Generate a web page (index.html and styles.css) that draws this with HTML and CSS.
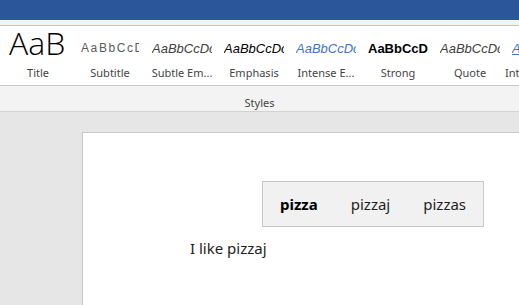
FILE: index.html
```html
<!DOCTYPE html>
<html lang="en">
  <head>
    <meta charset="UTF-8" />
    <title>Styles - pizza</title>
    <link rel="stylesheet" href="styles.css">
  </head>
  <body>
    <div class="titlebar"></div>
    <div class="tabstrip"></div>

    <div class="ribbon">
      <div class="gallery">
        <div class="style-item">
          <div class="preview title">AaB</div>
          <div class="label">Title</div>
        </div>
        <div class="style-item">
          <div class="preview subtitle">AaBbCcD</div>
          <div class="label">Subtitle</div>
        </div>
        <div class="style-item">
          <div class="preview subtle">AaBbCcDc</div>
          <div class="label">Subtle Em...</div>
        </div>
        <div class="style-item">
          <div class="preview emphasis">AaBbCcDc</div>
          <div class="label">Emphasis</div>
        </div>
        <div class="style-item">
          <div class="preview intense">AaBbCcDc</div>
          <div class="label">Intense E...</div>
        </div>
        <div class="style-item">
          <div class="preview strong">AaBbCcDc</div>
          <div class="label">Strong</div>
        </div>
        <div class="style-item">
          <div class="preview quote">AaBbCcDc</div>
          <div class="label">Quote</div>
        </div>
        <div class="style-item">
          <div class="preview intense-quote">AaBbCcDc</div>
          <div class="label">Intense Quote</div>
        </div>
      </div>
    </div>

    <div class="group-bar">
      <span class="group-name">Styles</span>
    </div>

    <div class="workspace">
      <div class="page">
        <div class="suggestions">
          <span class="suggestion first">pizza</span>
          <span class="suggestion">pizzaj</span>
          <span class="suggestion">pizzas</span>
        </div>
        <p class="body-text">I like pizzaj</p>
      </div>
    </div>
  </body>
</html>
```

FILE: styles.css
```css
body {
  margin: 0;
  font-family: "Noto Sans", "Open Sans", sans-serif;
  width: 519px;
  height: 305px;
  overflow: hidden;
  background: #e6e6e6;
}

.titlebar {
  height: 20px;
  background: #2b579a;
}

.tabstrip {
  height: 5px;
  background: #f3f3f3;
  border-bottom: 1px solid #c6c6c6;
}

.ribbon {
  height: 59px;
  background: #fff;
  border-bottom: 1px solid #c6c6c6;
  overflow: hidden;
}

.gallery {
  display: flex;
  padding-left: 2px;
}

.style-item {
  flex: 0 0 72px;
  width: 72px;
  display: flex;
  flex-direction: column;
  align-items: center;
}

.preview {
  width: 60px;
  height: 32px;
  padding-top: 6px;
  overflow: hidden;
  white-space: nowrap;
  display: flex;
  align-items: center;
  font-family: "Liberation Sans", Arial, sans-serif;
  font-size: 13px;
  color: #000;
}

.preview.title {
  font-family: "Open Sans", "Noto Sans", sans-serif;
  font-weight: 300;
  font-size: 32px;
  line-height: 38px;
  height: 38px;
  padding-top: 0;
  padding-left: 3px;
  width: 61px;
  align-items: flex-start;
  margin-top: -2px;
  margin-bottom: 2px;
}

.preview.subtitle {
  color: #5a5a5a;
  letter-spacing: 1.6px;
  font-size: 12px;
  width: 58px;
}

.preview.subtle {
  color: #404040;
  font-style: italic;
}

.preview.emphasis {
  font-style: italic;
}

.preview.intense {
  color: #4472c4;
  font-style: italic;
}

.preview.strong {
  font-weight: bold;
}

.preview.quote {
  color: #404040;
  font-style: italic;
}

.preview.intense-quote {
  color: #4472c4;
  font-style: italic;
  text-decoration: underline;
}

.label {
  font-size: 11px;
  color: #444;
  white-space: nowrap;
  line-height: 14px;
  margin-top: 2px;
}

.group-bar {
  height: 25px;
  background: #f3f3f3;
  border-bottom: 1px solid #d2d2d2;
  display: flex;
  align-items: flex-end;
}

.group-name {
  width: 580px;
  text-align: center;
  font-size: 11px;
  color: #444;
  line-height: 16px;
}

.workspace {
  padding: 20px 0 0 82px;
}

.page {
  height: 124px;
  background: #fff;
  border-left: 1px solid #c6c6c6;
  border-top: 1px solid #c6c6c6;
  padding: 48px 0 0 179px;
}

.suggestions {
  width: 222px;
  height: 46px;
  box-sizing: border-box;
  background: #f1f1f1;
  border: 1px solid #c8c8c8;
  display: flex;
  align-items: center;
  padding-left: 17px;
}

.suggestion {
  font-size: 15px;
  color: #1e1e1e;
  margin-right: 33px;
}

.suggestion.first {
  font-weight: bold;
  color: #000;
}

.body-text {
  margin: 11px 0 0 -72px;
  font-size: 15px;
  color: #1e1e1e;
}
```
